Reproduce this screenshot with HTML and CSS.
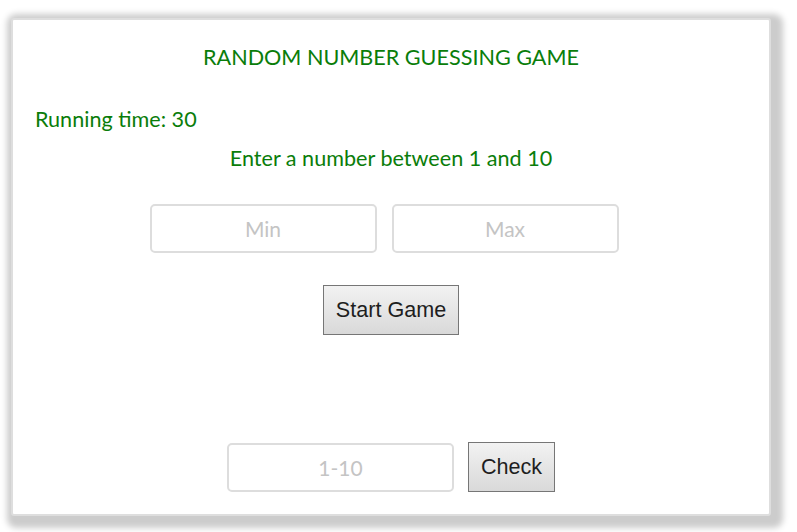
FILE: index.html
```html
<!DOCTYPE html>
<html>
<head>
<meta charset="utf-8">
<link rel="stylesheet" href="styles.css">
</head>
<body>
<div class="card">
  <h1 class="title">RANDOM NUMBER GUESSING GAME</h1>
  <p class="timer">Running time: 30</p>
  <p class="prompt">Enter a number between 1 and 10</p>
  <div class="range">
    <input class="field" type="text" placeholder="Min">
    <input class="field" type="text" placeholder="Max">
  </div>
  <div class="start-row">
    <button class="btn start">Start Game</button>
  </div>
  <div class="guess-row">
    <input class="field" type="text" placeholder="1-10">
    <button class="btn check">Check</button>
  </div>
</div>
</body>
</html>
```
FILE: styles.css
```css
html, body {
  margin: 0;
  padding: 0;
  background: #fff;
}
body {
  padding: 18px 0 16px 11px;
  min-height: 532px;
  box-sizing: border-box;
  font-family: Lato, "Open Sans", sans-serif;
}
.card {
  box-sizing: border-box;
  width: 760px;
  height: 498px;
  background: #fff;
  border: 2px solid #dedede;
  border-radius: 3px;
  box-shadow: 4px 4px 6px 8px #cccccc;
  padding: 24px 22px 0;
  display: flex;
  flex-direction: column;
  color: #0a7d0a;
}
.title {
  margin: 0;
  font-size: 21.6px;
  font-weight: normal;
  line-height: 26px;
  text-align: center;
}
.timer {
  margin: 36px 0 0;
  font-size: 21.6px;
  line-height: 26px;
}
.prompt {
  margin: 13px 0 0;
  font-size: 21.6px;
  line-height: 26px;
  text-align: center;
}
.range {
  margin-top: 33px;
  display: flex;
  justify-content: center;
  gap: 15px;
  padding-right: 14px;
}
.field {
  box-sizing: border-box;
  width: 227px;
  height: 49px;
  border: 2px solid #dddddd;
  border-radius: 5px;
  font-family: Lato, sans-serif;
  font-size: 21px;
  text-align: center;
  color: #333;
  background: #fff;
  outline: none;
}
.field::placeholder {
  color: #c4c4c4;
}
.start-row {
  margin-top: 32px;
  display: flex;
  justify-content: center;
}
.btn {
  box-sizing: border-box;
  height: 50px;
  font-family: "Liberation Sans", Arial, sans-serif;
  font-size: 21.6px;
  color: #1e1e1e;
  border: 1px solid #767676;
  border-radius: 0;
  background: linear-gradient(#f2f2f2, #d9d9d9);
  padding: 0 10px;
}
.start {
  width: 136px;
}
.guess-row {
  margin-top: 107px;
  display: flex;
  justify-content: center;
  align-items: center;
  gap: 14px;
}
.check {
  width: 87px;
}
```
